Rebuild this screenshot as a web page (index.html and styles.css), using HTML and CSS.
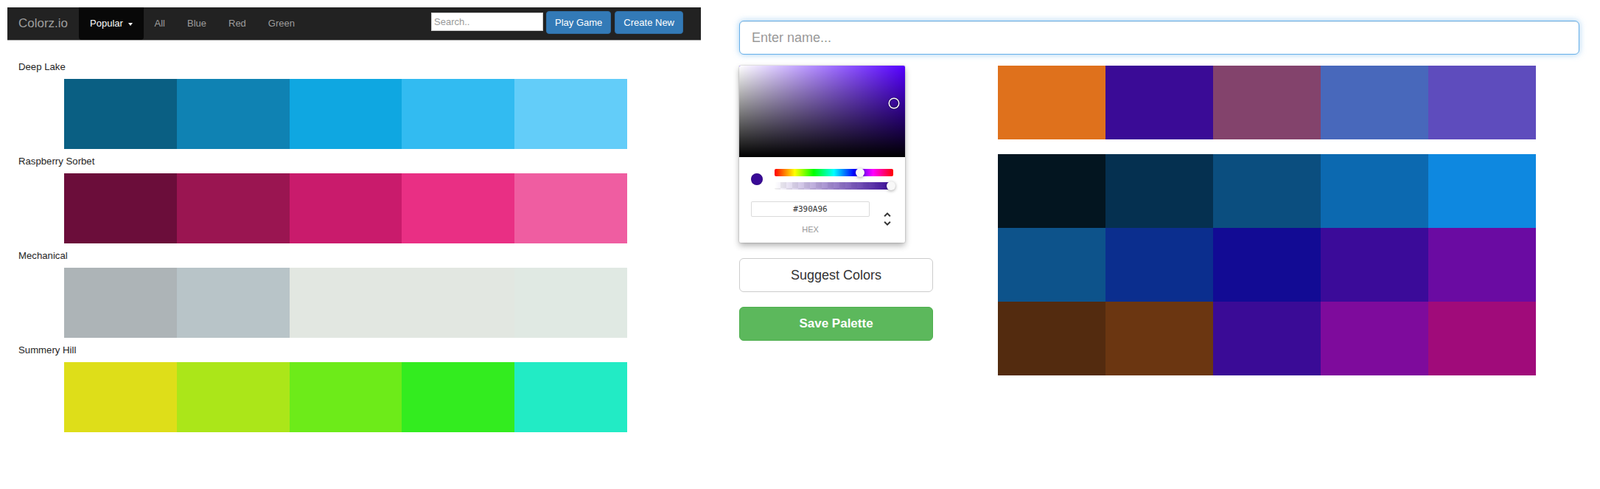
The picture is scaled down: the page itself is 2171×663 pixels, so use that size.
FILE: index.html
```html
<!DOCTYPE html>
<html>
<head>
<meta charset="utf-8">
<title>Colorz.io</title>
<link rel="stylesheet" href="styles.css">
</head>
<body>
<div class="page">
  <div class="left">
    <nav class="navbar">
      <a class="brand">Colorz.io</a>
      <ul class="nav">
        <li class="active">Popular <span class="caret"></span></li>
        <li>All</li>
        <li>Blue</li>
        <li>Red</li>
        <li>Green</li>
      </ul>
      <div class="spacer"></div>
      <div class="nav-tools">
        <input class="search" type="text" placeholder="Search..">
        <button class="btn-primary">Play Game</button>
        <button class="btn-primary">Create New</button>
      </div>
    </nav>

    <div class="palettes">
      <div class="palette">
        <div class="pal-name">Deep Lake</div>
        <div class="swatches">
          <div class="sw" style="background:#0a5f83"></div>
          <div class="sw" style="background:#0f82b3"></div>
          <div class="sw" style="background:#0fa7e1"></div>
          <div class="sw" style="background:#32bbf1"></div>
          <div class="sw" style="background:#63cdf9"></div>
        </div>
      </div>
      <div class="palette">
        <div class="pal-name">Raspberry Sorbet</div>
        <div class="swatches">
          <div class="sw" style="background:#6b0d3a"></div>
          <div class="sw" style="background:#9a1551"></div>
          <div class="sw" style="background:#c91b6c"></div>
          <div class="sw" style="background:#e92f84"></div>
          <div class="sw" style="background:#ef5da1"></div>
        </div>
      </div>
      <div class="palette">
        <div class="pal-name">Mechanical</div>
        <div class="swatches">
          <div class="sw" style="background:#adb4b7"></div>
          <div class="sw" style="background:#b8c4c8"></div>
          <div class="sw" style="background:#e2e7e1"></div>
          <div class="sw" style="background:#e2e7e1"></div>
          <div class="sw" style="background:#e0e9e3"></div>
        </div>
      </div>
      <div class="palette">
        <div class="pal-name">Summery Hill</div>
        <div class="swatches">
          <div class="sw" style="background:#dede19"></div>
          <div class="sw" style="background:#abe619"></div>
          <div class="sw" style="background:#6deb19"></div>
          <div class="sw" style="background:#33ec1f"></div>
          <div class="sw" style="background:#22ebc5"></div>
        </div>
      </div>
    </div>
  </div>

  <div class="right">
    <input class="name-input" type="text" placeholder="Enter name...">
    <div class="editor">
      <div class="editor-left">
        <div class="chrome-picker">
          <div class="saturation">
            <div class="sat-white"></div>
            <div class="sat-black"></div>
            <div class="sat-pointer" style="left:93.3%;top:41.2%"></div>
          </div>
          <div class="picker-body">
            <div class="controls">
              <div class="color-col"><div class="cur-swatch"></div></div>
              <div class="toggles">
                <div class="hue">
                  <div class="slider-pointer" style="left:72.2%"></div>
                </div>
                <div class="alpha">
                  <div class="alpha-grad"></div>
                  <div class="slider-pointer" style="left:98%"></div>
                </div>
              </div>
            </div>
            <div class="fields">
              <div class="field">
                <input class="hex-input" type="text" value="#390A96">
                <span class="field-label">hex</span>
              </div>
              <div class="toggle">
                <svg class="toggle-icon" viewBox="0 0 24 24" width="24" height="24"><path fill="#333" d="M12,18.17L8.83,15L7.42,16.41L12,21L16.59,16.41L15.17,15M12,5.83L15.17,9L16.58,7.59L12,3L7.41,7.59L8.83,9L12,5.83Z"/></svg>
              </div>
            </div>
          </div>
        </div>
        <button class="btn-default">Suggest Colors</button>
        <button class="btn-success">Save Palette</button>
      </div>
      <div class="editor-right">
        <div class="big-row">
          <div class="sw" style="background:#df711c"></div>
          <div class="sw" style="background:#3a0b96"></div>
          <div class="sw" style="background:#83436c"></div>
          <div class="sw" style="background:#4868bb"></div>
          <div class="sw" style="background:#5e4cbd"></div>
        </div>
        <div class="big-grid">
          <div class="sw" style="background:#031520"></div>
          <div class="sw" style="background:#053050"></div>
          <div class="sw" style="background:#0b4e7f"></div>
          <div class="sw" style="background:#0c69b0"></div>
          <div class="sw" style="background:#0e88e0"></div>
          <div class="sw" style="background:#0d538b"></div>
          <div class="sw" style="background:#0b2e8e"></div>
          <div class="sw" style="background:#120b94"></div>
          <div class="sw" style="background:#3b0b99"></div>
          <div class="sw" style="background:#6a0ba2"></div>
          <div class="sw" style="background:#532b0f"></div>
          <div class="sw" style="background:#6b3611"></div>
          <div class="sw" style="background:#3a0b96"></div>
          <div class="sw" style="background:#7e0b9c"></div>
          <div class="sw" style="background:#a00b7a"></div>
        </div>
      </div>
    </div>
  </div>
</div>
</body>
</html>
```

FILE: styles.css
```css
* { box-sizing: border-box; }
html, body { margin: 0; padding: 0; background: #fff; }
body { font-family: "Liberation Sans", Arial, Helvetica, sans-serif; color: #333; }

.page { display: flex; align-items: flex-start; padding-top: 10px; }

.left { margin-left: 10px; width: 941px; flex: none; }

.navbar {
  display: flex;
  align-items: stretch;
  height: 45px;
  background: #222;
  border-bottom: 1px solid #a8a8a8;
}
.brand {
  padding: 0 15px;
  line-height: 44px;
  font-size: 17px;
  color: #9d9d9d;
}
.nav { display: flex; list-style: none; margin: 0; padding: 0; }
.nav li {
  padding: 0 15px;
  line-height: 44px;
  font-size: 13px;
  color: #9d9d9d;
}
.nav li.active { background: #080808; color: #fff; border-radius: 0 0 4px 4px; }
.caret {
  display: inline-block;
  width: 0; height: 0;
  margin-left: 3px;
  vertical-align: middle;
  border-top: 4px solid #fff;
  border-left: 3.5px solid transparent;
  border-right: 3.5px solid transparent;
}
.spacer { flex: 1; }
.nav-tools { display: flex; align-items: flex-start; padding-top: 5px; margin-right: 24px; }
.search {
  width: 152px; height: 25px;
  margin-top: 2px; margin-right: 4px;
  border: 1px solid #ccc;
  padding: 0 3px;
  font-family: "Liberation Sans", Arial, sans-serif;
  font-size: 13px;
  background: #fff;
  outline: none;
}
.search::placeholder { color: #999; }
.btn-primary {
  height: 31px;
  padding: 0 11px;
  margin-right: 5px;
  font-family: "Liberation Sans", Arial, sans-serif;
  font-size: 13px;
  color: #fff;
  background: #337ab7;
  border: 1px solid #2e6da4;
  border-radius: 4px;
}
.btn-primary:last-child { margin-right: 0; }

.palettes { padding: 27px 0 0 15px; }
.pal-name { font-size: 13.2px; line-height: 18px; color: #1e1e1e; margin-bottom: 7px; }
.swatches { display: flex; margin-left: 62px; width: 764px; height: 95px; margin-bottom: 8px; }
.swatches .sw { flex: 1; }

.right { margin-left: 52px; margin-top: 18px; width: 1140px; flex: none; }
.name-input {
  display: block;
  width: 1140px; height: 46px;
  padding: 10px 16px;
  font-family: "Liberation Sans", Arial, sans-serif;
  font-size: 18px;
  color: #555;
  border: 1px solid #66afe9;
  border-radius: 6px;
  box-shadow: inset 0 1px 1px rgba(0,0,0,.075), 0 0 8px rgba(102,175,233,.6);
  outline: none;
}
.name-input::placeholder { color: #999; }

.editor { display: flex; align-items: flex-start; margin-top: 15px; }
.editor-left { width: 263px; flex: none; }
.editor-right { margin-left: 88px; width: 730px; }

.chrome-picker {
  width: 225px;
  background: #fff;
  border-radius: 2px;
  box-shadow: 0 0 2px rgba(0,0,0,.3), 0 4px 8px rgba(0,0,0,.3);
  font-family: "Liberation Sans", Arial, sans-serif;
}
.saturation {
  position: relative;
  height: 124px;
  background: hsl(260, 100%, 50%);
  border-radius: 2px 2px 0 0;
  overflow: hidden;
}
.sat-white, .sat-black { position: absolute; inset: 0; }
.sat-white { background: linear-gradient(to right, #fff, rgba(255,255,255,0)); }
.sat-black { background: linear-gradient(to top, #000, rgba(0,0,0,0)); }
.sat-pointer {
  position: absolute;
  width: 12px; height: 12px;
  border-radius: 6px;
  transform: translate(-6px, -6px);
  box-shadow: 0 0 0 1.5px #fff, inset 0 0 1px 1px rgba(0,0,0,.3), 0 0 1px 2px rgba(0,0,0,.4);
}
.picker-body { padding: 16px 16px 12px; }
.controls { display: flex; }
.color-col { width: 32px; flex: none; }
.cur-swatch {
  margin-top: 6px;
  width: 16px; height: 16px;
  border-radius: 8px;
  background: #390a96;
  box-shadow: inset 0 0 0 1px rgba(0,0,0,.1);
}
.toggles { flex: 1; }
.hue {
  position: relative;
  height: 10px;
  margin-bottom: 8px;
  border-radius: 2px;
  background: linear-gradient(to right, #f00 0%, #ff0 17%, #0f0 33%, #0ff 50%, #00f 67%, #f0f 83%, #f00 100%);
}
.alpha {
  position: relative;
  height: 10px;
  border-radius: 2px;
  background-color: #fff;
  background-image:
    linear-gradient(45deg, rgba(0,0,0,.06) 25%, transparent 25%, transparent 75%, rgba(0,0,0,.06) 75%),
    linear-gradient(45deg, rgba(0,0,0,.06) 25%, transparent 25%, transparent 75%, rgba(0,0,0,.06) 75%);
  background-size: 16px 16px;
  background-position: 0 0, 8px 8px;
}
.alpha-grad {
  position: absolute; inset: 0;
  border-radius: 2px;
  background: linear-gradient(to right, rgba(57,10,150,0) 0%, rgb(57,10,150) 100%);
}
.slider-pointer {
  position: absolute;
  top: 0;
  width: 12px; height: 12px;
  border-radius: 6px;
  transform: translate(-6px, -1px);
  background: #f8f8f8;
  box-shadow: 0 1px 4px 0 rgba(0,0,0,.37);
}
.fields { display: flex; padding-top: 16px; }
.field { flex: 1; }
.hex-input {
  display: block;
  width: 100%;
  height: 21px;
  font-family: "DejaVu Sans Mono", "Liberation Mono", monospace;
  font-size: 11px;
  color: #333;
  text-align: center;
  border: none;
  border-radius: 2px;
  box-shadow: inset 0 0 0 1px #dadada;
  outline: none;
}
.field-label {
  display: block;
  margin-top: 12px;
  font-size: 11px;
  line-height: 11px;
  color: #969696;
  text-align: center;
  text-transform: uppercase;
}
.toggle { width: 32px; flex: none; text-align: right; }
.toggle-icon { display: inline-block; margin-right: -4px; margin-top: 12px; }

.btn-default, .btn-success {
  display: block;
  width: 263px; height: 46px;
  font-family: "Liberation Sans", Arial, sans-serif;
  font-size: 18px;
  border-radius: 6px;
}
.btn-default { margin-top: 21px; background: #fff; color: #333; border: 1px solid #ccc; }
.btn-success { margin-top: 20px; background: #5cb85c; color: #fff; border: 1px solid #4cae4c; font-size: 17px; font-weight: bold; }

.big-row { display: flex; height: 100px; }
.big-row .sw { flex: 1; }
.big-grid {
  display: grid;
  grid-template-columns: repeat(5, 146px);
  grid-auto-rows: 100px;
  margin-top: 20px;
}
```
